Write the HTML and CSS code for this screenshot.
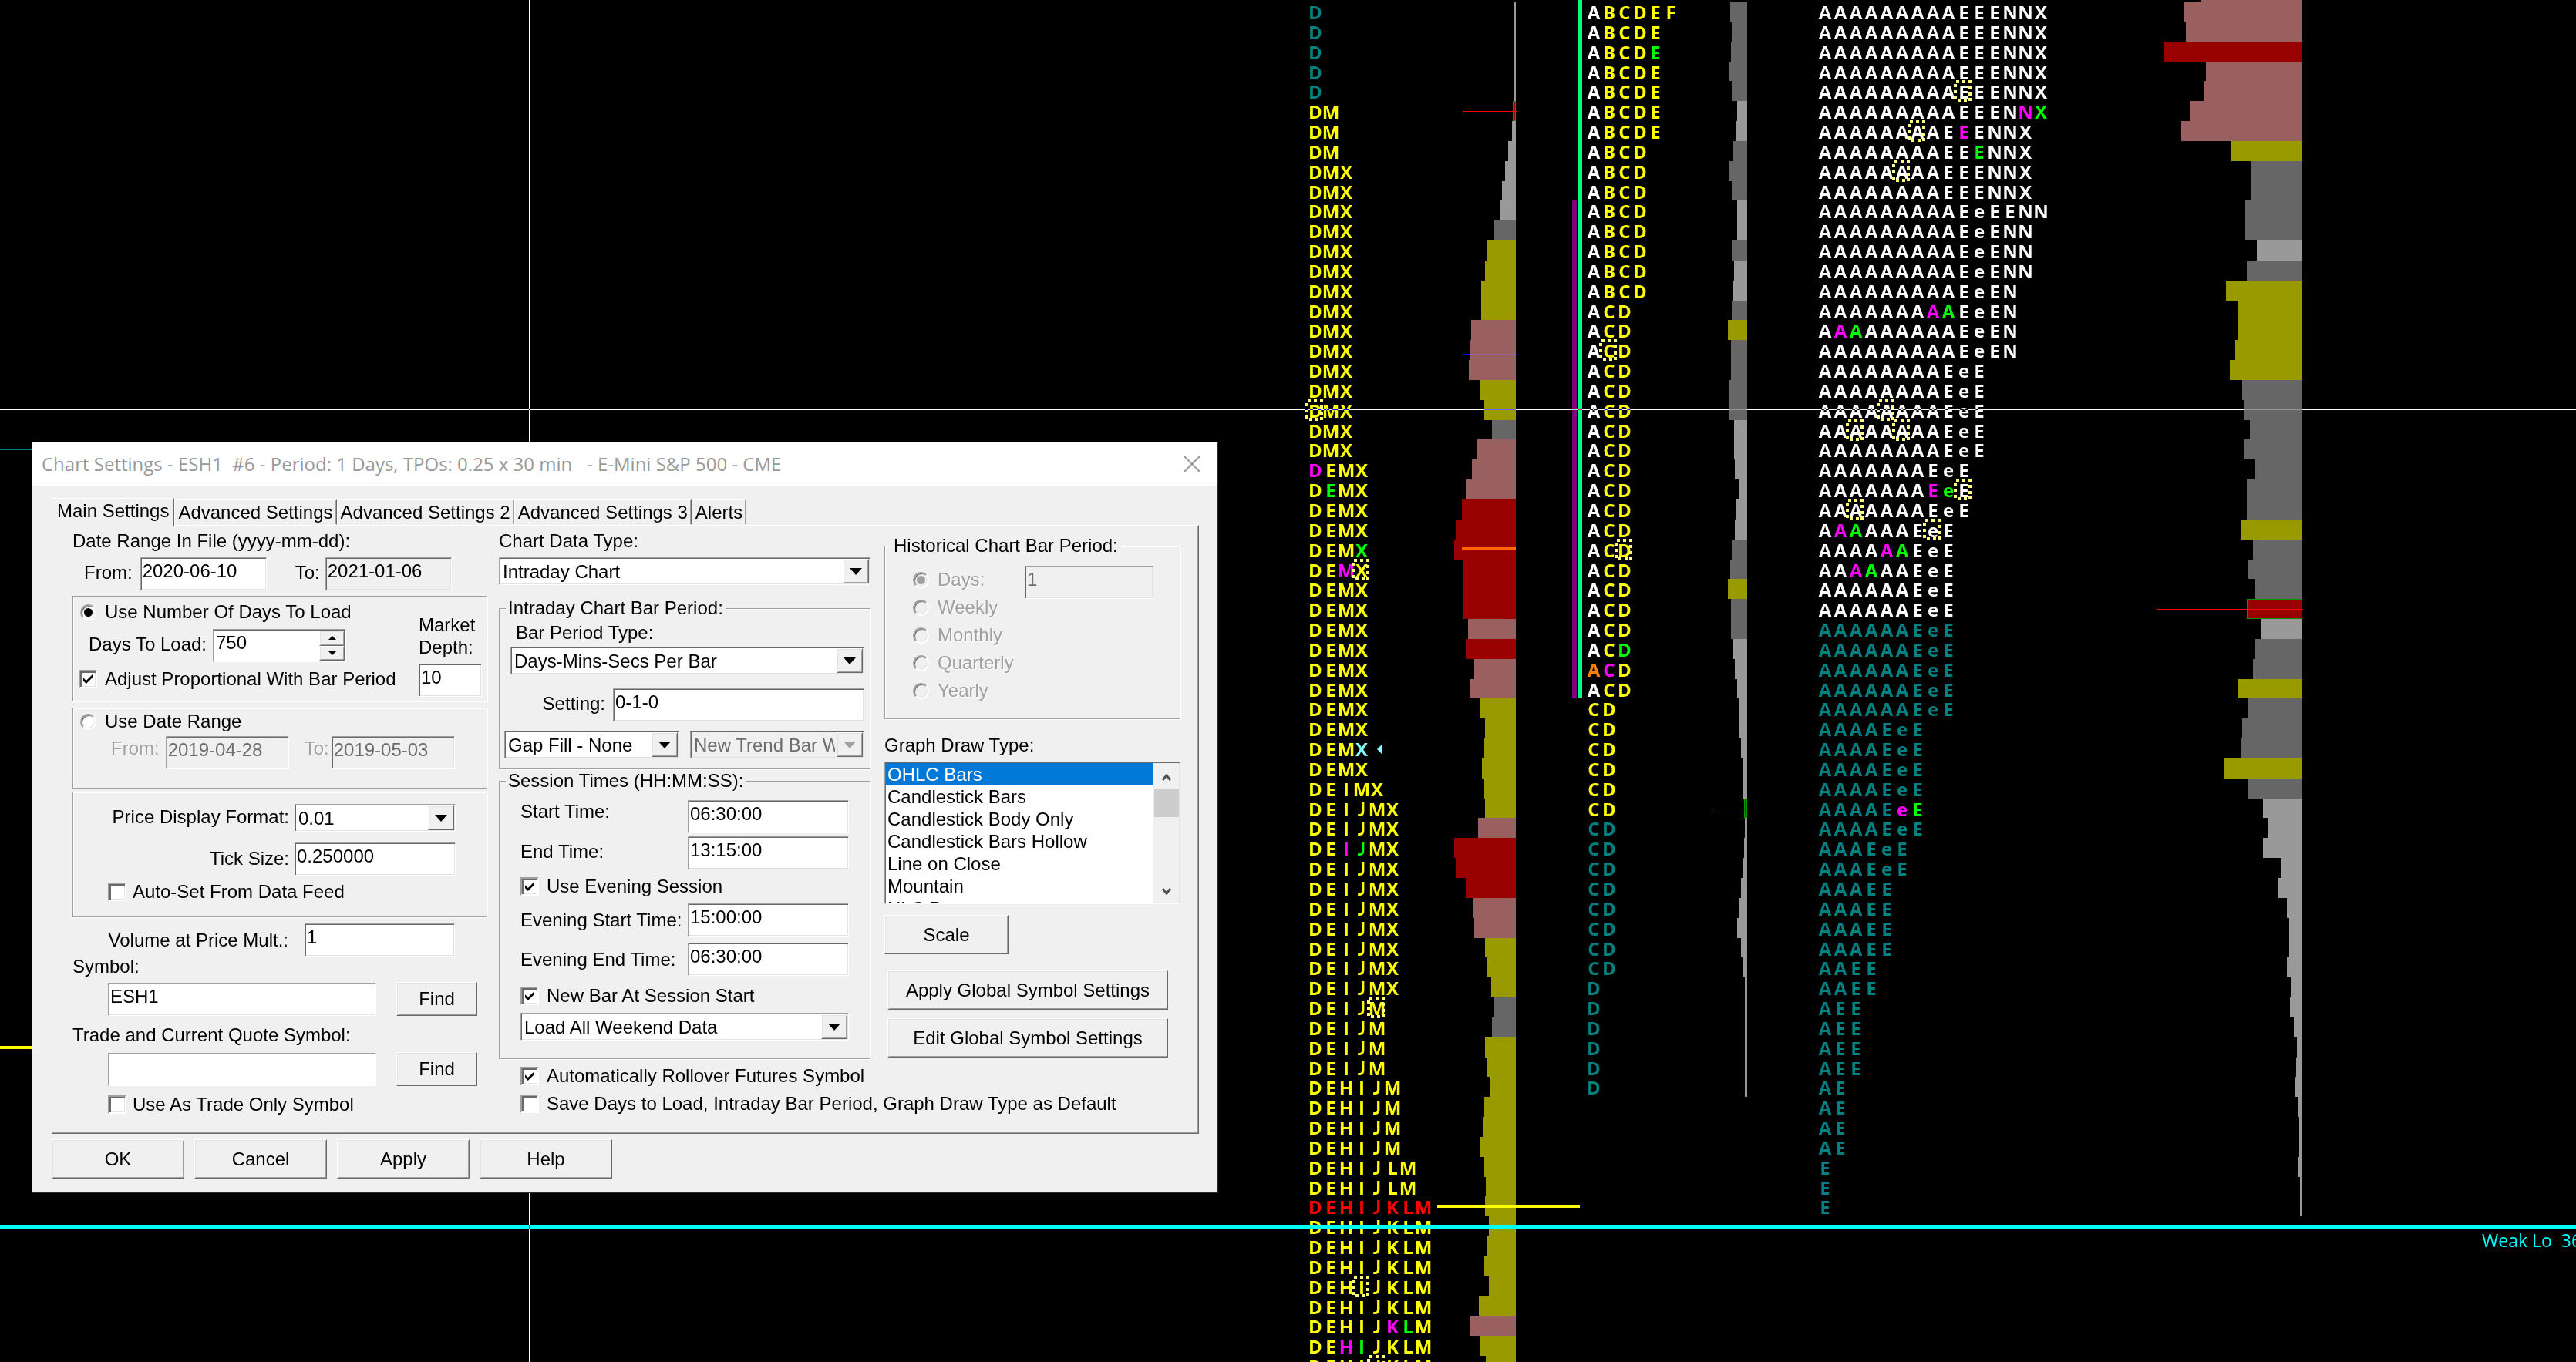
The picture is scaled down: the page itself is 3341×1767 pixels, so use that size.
FILE: index.html
```html
<!DOCTYPE html>
<html lang="en">
<head>
<meta charset="utf-8">
<title>Chart Settings - ESH1</title>
<link rel="stylesheet" href="styles.css">
</head>
<body>
<main class="chart">
  <section class="profile profile-first" aria-label="Profile 1"><div class="rows" id="profile-1"></div></section>
  <section class="profile profile-second" aria-label="Profile 2">
    <span class="range range-purple"></span>
    <span class="range range-green"></span>
    <div class="rows" id="profile-2"></div>
  </section>
  <section class="profile profile-third" aria-label="Profile 3"><div class="rows" id="profile-3"></div></section>

  <i class="level level-teal"></i>
  <i class="level level-yellow-left"></i>
  <i class="level level-yellow"></i>
  <i class="level level-cyan"></i>
  <p class="level-label">Weak Lo  3650</p>
  <i class="crosshair crosshair-h"></i>
  <i class="crosshair crosshair-v"></i>
</main>

<form class="dialog" role="dialog" aria-labelledby="dialog-title" onsubmit="return false">
  <header class="titlebar">
    <h1 class="title" id="dialog-title">Chart Settings - ESH1  #6 - Period: 1 Days, TPOs: 0.25 x 30 min   - E-Mini S&amp;P 500 - CME</h1>
    <button class="close" type="button" aria-label="Close"><svg width="22" height="22" viewBox="0 0 22 22"><path d="M1 1 21 21M21 1 1 21" fill="none" stroke="#999" stroke-width="2"/></svg></button>
  </header>

  <div class="dialog-body">
    <nav class="tabs" role="tablist">
      <button class="tab tab-active" type="button" role="tab" aria-selected="true">Main Settings</button>
      <button class="tab" type="button" role="tab">Advanced Settings</button>
      <button class="tab" type="button" role="tab">Advanced Settings 2</button>
      <button class="tab" type="button" role="tab">Advanced Settings 3</button>
      <button class="tab" type="button" role="tab">Alerts</button>
    </nav>

    <div class="panel" role="tabpanel">
      <div class="column">
        <p class="caption">Date Range In File (yyyy-mm-dd):</p>
        <div class="row date-row">
          <label class="label" for="file-from">From:</label>
          <input class="field date-field" id="file-from" value="2020-06-10">
          <label class="label label-to" for="file-to">To:</label>
          <input class="field date-field field-locked" id="file-to" value="2021-01-06" readonly>
        </div>

        <fieldset class="box days-box">
          <div class="days-main">
            <label class="tick"><input class="radio" type="radio" name="load" checked>Use Number Of Days To Load</label>
            <div class="row days-row">
              <label class="label" for="days">Days To Load:</label>
              <span class="spin">
                <input class="spin-field" id="days" value="750">
                <span class="spin-buttons">
                  <button class="spin-button" type="button" aria-label="More"><i class="arrow arrow-up"></i></button>
                  <button class="spin-button" type="button" aria-label="Less"><i class="arrow arrow-small"></i></button>
                </span>
              </span>
            </div>
            <label class="tick"><input class="check" type="checkbox" checked>Adjust Proportional With Bar Period</label>
          </div>
          <div class="depth">
            <label class="depth-label" for="depth">Market Depth:</label>
            <input class="field depth-field" id="depth" value="10">
          </div>
        </fieldset>

        <fieldset class="box range-box">
          <label class="tick"><input class="radio" type="radio" name="load">Use Date Range</label>
          <div class="row range-row">
            <label class="label label-off" for="range-from">From:</label>
            <input class="field range-field" id="range-from" value="2019-04-28" disabled>
            <label class="label label-off label-range-to" for="range-to">To:</label>
            <input class="field range-field" id="range-to" value="2019-05-03" disabled>
          </div>
        </fieldset>

        <fieldset class="box price-box">
          <div class="row">
            <label class="label label-right" for="format">Price Display Format:</label>
            <span class="combo combo-short"><select class="combo-select" id="format"><option>0.01</option></select><span class="combo-button"><i class="arrow"></i></span></span>
          </div>
          <div class="row tick-row">
            <label class="label label-right" for="tick-size">Tick Size:</label>
            <input class="field time-field" id="tick-size" value="0.250000">
          </div>
          <label class="tick tick-indent"><input class="check" type="checkbox">Auto-Set From Data Feed</label>
        </fieldset>

        <div class="row volume-row">
          <label class="label label-right" for="mult">Volume at Price Mult.:</label>
          <input class="field mult-field" id="mult" value="1">
        </div>
        <label class="caption caption-symbol" for="symbol">Symbol:</label>
        <div class="row symbol-row">
          <input class="field symbol-field" id="symbol" value="ESH1">
          <button class="button find" type="button">Find</button>
        </div>
        <label class="caption caption-trade" for="trade">Trade and Current Quote Symbol:</label>
        <div class="row symbol-row">
          <input class="field symbol-field" id="trade" value="">
          <button class="button find" type="button">Find</button>
        </div>
        <label class="tick tick-trade"><input class="check" type="checkbox">Use As Trade Only Symbol</label>
      </div>

      <div class="column">
        <label class="caption" for="data-type">Chart Data Type:</label>
        <span class="combo combo-data"><select class="combo-select" id="data-type"><option>Intraday Chart</option></select><span class="combo-button"><i class="arrow"></i></span></span>

        <fieldset class="group intraday">
          <legend class="legend">Intraday Chart Bar Period:</legend>
          <label class="caption caption-bar" for="bar-type">Bar Period Type:</label>
          <span class="combo combo-bar"><select class="combo-select" id="bar-type"><option>Days-Mins-Secs Per Bar</option></select><span class="combo-button"><i class="arrow"></i></span></span>
          <div class="row setting-row">
            <label class="label" for="setting">Setting:</label>
            <input class="field setting-field" id="setting" value="0-1-0">
          </div>
          <div class="row gap-row">
            <span class="combo combo-gap"><select class="combo-select" aria-label="Gap fill"><option>Gap Fill - None</option></select><span class="combo-button"><i class="arrow"></i></span></span>
            <span class="combo combo-off"><select class="combo-select" aria-label="Trend bar" disabled><option>New Trend Bar When</option></select><span class="combo-button"><i class="arrow"></i></span></span>
          </div>
        </fieldset>

        <fieldset class="group session">
          <legend class="legend">Session Times (HH:MM:SS):</legend>
          <div class="row time-row"><label class="label label-raised" for="start">Start Time:</label><input class="field time-field" id="start" value="06:30:00"></div>
          <div class="row time-row"><label class="label" for="end">End Time:</label><input class="field time-field" id="end" value="13:15:00"></div>
          <label class="tick"><input class="check" type="checkbox" checked>Use Evening Session</label>
          <div class="row time-row"><label class="label label-level" for="ev-start">Evening Start Time:</label><input class="field time-field" id="ev-start" value="15:00:00"></div>
          <div class="row time-row time-row-last"><label class="label label-level" for="ev-end">Evening End Time:</label><input class="field time-field" id="ev-end" value="06:30:00"></div>
          <label class="tick tick-bar"><input class="check" type="checkbox" checked>New Bar At Session Start</label>
          <span class="combo combo-weekend"><select class="combo-select" aria-label="Weekend data"><option>Load All Weekend Data</option></select><span class="combo-button"><i class="arrow"></i></span></span>
        </fieldset>

        <label class="tick tick-option"><input class="check" type="checkbox" checked>Automatically Rollover Futures Symbol</label>
        <label class="tick tick-option tick-save"><input class="check" type="checkbox">Save Days to Load, Intraday Bar Period, Graph Draw Type as Default</label>
      </div>

      <div class="column column-last">
        <fieldset class="group historical">
          <legend class="legend">Historical Chart Bar Period:</legend>
          <div class="periods">
            <label class="tick tick-off"><input class="radio" type="radio" name="period" checked disabled>Days:</label>
            <label class="tick tick-off"><input class="radio" type="radio" name="period" disabled>Weekly</label>
            <label class="tick tick-off"><input class="radio" type="radio" name="period" disabled>Monthly</label>
            <label class="tick tick-off"><input class="radio" type="radio" name="period" disabled>Quarterly</label>
            <label class="tick tick-off"><input class="radio" type="radio" name="period" disabled>Yearly</label>
          </div>
          <input class="field period-field" value="1" aria-label="Number of days" disabled>
        </fieldset>

        <label class="caption caption-graph" for="draw-type">Graph Draw Type:</label>
        <div class="list">
          <select class="list-select" id="draw-type" size="7">
            <option class="item" selected>OHLC Bars</option>
            <option class="item">Candlestick Bars</option>
            <option class="item">Candlestick Body Only</option>
            <option class="item">Candlestick Bars Hollow</option>
            <option class="item">Line on Close</option>
            <option class="item">Mountain</option>
            <option class="item">HLC Bars</option>
          </select>
          <div class="scroll">
            <svg class="scroll-arrow" width="12" height="10" viewBox="0 0 12 10"><path d="M1 8 6 2 11 8" fill="none" stroke="#505050" stroke-width="3"/></svg>
            <span class="thumb"></span>
            <svg class="scroll-arrow scroll-down" width="12" height="10" viewBox="0 0 12 10"><path d="M1 2 6 8 11 2" fill="none" stroke="#505050" stroke-width="3"/></svg>
          </div>
        </div>
        <button class="button scale" type="button">Scale</button>
        <button class="button global global-apply" type="button">Apply Global Symbol Settings</button>
        <button class="button global" type="button">Edit Global Symbol Settings</button>
      </div>
    </div>

    <footer class="actions">
      <button class="button action" type="button">OK</button>
      <button class="button action" type="button">Cancel</button>
      <button class="button action" type="button">Apply</button>
      <button class="button action" type="button">Help</button>
    </footer>
  </div>
</form>
<script src="script.js"></script>
</body>
</html>
```
FILE: styles.css
```css
* { box-sizing: border-box; }

body {
  margin: 0;
  background: #000;
  color: #000;
  font: 24px/26px "Liberation Sans", Arial, sans-serif;
  overflow: hidden;
}

p, h1, fieldset, legend { margin: 0; padding: 0; font-size: inherit; font-weight: normal; }
button, input, select { font: inherit; color: inherit; margin: 0; border-radius: 0; }

/* Chart */
.chart {
  position: relative;
  display: flex;
  justify-content: flex-end;
  height: 100vh;
  padding: 2px 355px 0 0;
  overflow: hidden;
  font: bold 24px/24px "Open Sans", "Noto Sans", sans-serif;
}

.profile { display: flex; flex: none; align-items: flex-start; height: 1783px; position: relative; }
.profile-first { width: 270px; margin-right: 73px; }
.profile-second { width: 227px; margin-right: 91px; }
.profile-third { width: 629px; }
.profile-third::before { content: ""; position: absolute; top: -2px; right: 0; width: 131px; height: 2px; background: #9a5f5f; }

.range { flex: none; width: 6px; margin-right: 1px; }
.range-purple { height: 646px; margin-top: 258px; background: #800080; }
.range-green { height: 906px; margin: -2px 5px 0 0; background: #00ff80; }

.rows { flex: 1; display: grid; grid-template-rows: repeat(69, minmax(0, 1fr)); height: 100%; }
.price { position: relative; display: flex; justify-content: space-between; }
.letters { display: flex; padding-top: 2px; }
.letter { position: relative; display: flex; justify-content: center; width: 20px; }
.letter-j { font-family: Lato, "Open Sans", sans-serif; }

.yellow { color: #ff0; }
.white { color: #fff; }
.teal { color: #008080; }
.red { color: #f00; }
.magenta { color: #f0f; }
.green { color: #0f0; }
.orange { color: #ff8000; }
.cyan { color: #80ffff; }

.volume { flex: none; height: 100%; }
.volume-light { background: #999; }
.volume-dark { background: #666; }
.volume-olive { background: #990; }
.volume-pink { background: #9a5f5f; }
.volume-red { background: #900; }
.volume-peak { background: #900; border: 1px solid #090; }

.dots { position: absolute; left: -3px; top: -3px; fill: #ffff80; }
.pointer { position: absolute; left: 90px; top: 7px; fill: #80ffff; }

.mark { position: absolute; right: -1px; height: 1px; }
.mark-red { top: 13px; background: #f00; }
.mark-blue { top: 18px; background: #00f; mix-blend-mode: difference; }
.mark-orange { top: 10px; right: 0; height: 4px; background: #f60; }

.level { position: absolute; }
.level-teal { left: 0; top: 582px; width: 60px; height: 2px; background: #008080; }
.level-yellow-left { left: 0; top: 1357px; width: 60px; height: 4px; background: #ff0; }
.level-yellow { right: 1292px; top: 1563px; width: 185px; height: 4px; background: #ff0; }
.level-cyan { left: 0; right: 0; top: 1589px; height: 5px; background: #0ff; }
.level-label {
  position: absolute;
  left: calc(100% - 122px);
  top: 1596px;
  color: #0ff;
  font: 23px/26px "Open Sans", "Noto Sans", sans-serif;
  white-space: pre;
}
.crosshair { position: absolute; background: #fff; mix-blend-mode: difference; }
.crosshair-h { left: 0; right: 0; top: 531px; height: 1px; }
.crosshair-v { left: 686px; top: 0; bottom: 0; width: 1px; }

/* Dialog window */
.dialog {
  position: absolute;
  left: 42px;
  top: 574px;
  width: 46vw;
  background: #f0f0f0;
  box-shadow: 0 0 0 1px #2b2b2b;
  white-space: nowrap;
}
.titlebar { display: flex; align-items: center; justify-content: space-between; height: 56px; padding: 0 22px 0 12px; background: #fff; }
.title { color: #999; font: 24px/28px "Open Sans", "Noto Sans", sans-serif; white-space: pre; }
.close { display: flex; padding: 0; border: 0; background: none; }
.dialog-body { padding: 16px 24px 18px 25px; }

.tabs { display: flex; align-items: flex-end; height: 35px; }
.tab {
  height: 33px;
  padding: 0 4px;
  border: 1px solid;
  border-color: #fff #696969 transparent #fff;
  background: #f0f0f0;
  box-shadow: inset -1px 0 #a0a0a0;
}
.tab-active { height: 37px; margin-bottom: -2px; padding: 0 6px 4px; border-bottom: 0; }

.panel {
  display: grid;
  grid-template-columns: 538px 482px 384px;
  column-gap: 15px;
  height: 790px;
  padding: 7px 0 0 26px;
  border: 1px solid;
  border-color: #fff #696969 #696969 #fff;
  box-shadow: inset -1px -1px #a0a0a0;
}
.column { display: flex; flex-direction: column; min-width: 0; }
.column-last { padding: 6px 0 0 3px; width: 387px; }

.actions { display: flex; gap: 13px; padding-top: 7px; }
.action { width: 172px; height: 51px; }

.button, .combo-button, .spin-button {
  padding: 0;
  border: 1px solid;
  border-color: #fff #696969 #696969 #fff;
  background: #f0f0f0;
  box-shadow: inset 1px 1px #e3e3e3, inset -1px -1px #a0a0a0;
}

.field, .combo, .spin, .list {
  border: 1px solid;
  border-color: #a0a0a0 #fff #fff #a0a0a0;
  background: #fff;
  box-shadow: inset 1px 1px #696969, inset -1px -1px #e3e3e3;
}
.field { flex: none; height: 43px; padding: 1px 2px 8px; outline: 0; }
.field-locked { background: #f0f0f0; }
.field:disabled { background: #f0f0f0; color: #6d6d6d; }

.row { display: flex; align-items: center; }
.label { flex: none; padding-bottom: 4px; }
.label-level { padding-bottom: 0; }
.label-raised { padding-bottom: 14px; }
.label-off { color: #a0a0a0; padding-bottom: 12px; text-shadow: 1px 1px #fff; }
.label-right { width: 280px; text-align: right; }
.price-box .label-right { padding-bottom: 2px; }
.volume-row .label-right { padding-bottom: 0; }
.caption { display: block; flex: none; height: 26px; }

.tick { display: flex; align-items: center; height: 24px; line-height: 28px; }
.tick-off { color: #a0a0a0; text-shadow: 1px 1px #fff; }

.check, .radio {
  appearance: none;
  flex: none;
  display: flex;
  align-items: center;
  justify-content: center;
  width: 24px;
  height: 24px;
  margin-right: 10px;
  border: 2px solid;
  border-color: #a0a0a0 #fff #fff #a0a0a0;
  background: #fff;
  box-shadow: inset 2px 2px #696969, inset -1px -1px #e3e3e3;
}
.check:checked::before {
  content: "";
  width: 12px;
  height: 12px;
  background: #000;
  clip-path: polygon(0 35%, 32% 66%, 100% 0, 100% 34%, 32% 100%, 0 68%);
}
.radio {
  width: 21px;
  height: 21px;
  margin-right: 11px;
  border-radius: 50%;
  box-shadow: inset 1px 1px #696969, inset -1px -1px #e3e3e3;
}
.radio:checked::before { content: ""; width: 11px; height: 11px; border-radius: 50%; background: #000; }
.radio:disabled { background: #f0f0f0; }
.radio:disabled:checked::before { background: #a0a0a0; }

.arrow { border: 8px solid transparent; border-top: 9px solid #000; border-bottom: 0; }
.arrow-small { border-width: 5px 5px 0; }
.arrow-up { border: 5px solid transparent; border-bottom-color: #000; border-top: 0; }

.combo { display: grid; grid-template-columns: 1fr 34px; height: 36px; padding: 1px; }
.combo-select { grid-area: 1 / 1 / 2 / 3; appearance: none; min-width: 0; padding: 1px 36px 0 3px; border: 0; background: none; outline: 0; }
.combo-button { grid-area: 1 / 2; display: flex; align-items: center; justify-content: center; pointer-events: none; }
.combo-short { width: 209px; }
.combo-off { background: #f0f0f0; color: #6d6d6d; }
.combo-off .combo-select { opacity: 1; color: #6d6d6d; overflow: hidden; text-overflow: clip; }
.combo-off .arrow { border-top-color: #a0a0a0; }

/* First column */
.date-row { margin-top: 8px; padding-left: 15px; }
.date-field { width: 164px; margin-left: auto; }
.label-to { margin-left: 37px; }
.date-row .date-field { margin-left: 10px; }
.date-row .field-locked { margin-left: 7px; }

.box, .group { min-width: 0; border: 1px solid #a0a0a0; box-shadow: 1px 1px #fff, inset 1px 1px #fff; }
.days-box { display: flex; justify-content: space-between; height: 137px; margin-top: 7px; padding: 8px 6px 0 7px; }
.days-main { display: flex; flex-direction: column; }
.days-box .radio, .range-box .radio { margin-left: 2px; }
.days-row { margin: 10px 0; padding-left: 13px; gap: 8px; }
.spin { display: flex; width: 173px; height: 43px; padding: 1px; }
.spin-field { flex: 1; min-width: 0; padding: 0 2px 7px; border: 0; background: none; outline: 0; }
.spin-buttons { display: grid; width: 33px; }
.spin-button { display: flex; align-items: center; justify-content: center; }
.depth { display: flex; flex-direction: column; width: 82px; padding-top: 14px; }
.depth-label { height: 65px; line-height: 29px; white-space: normal; }
.depth-field { width: 82px; }

.range-box { height: 105px; margin-top: 8px; padding: 5px 7px 0; }
.range-row { margin-top: 7px; padding-left: 42px; }
.range-field { width: 160px; margin-left: 8px; }
.label-range-to { margin-left: 20px; }
.label-range-to + .range-field { margin-left: 3px; }

.price-box { height: 163px; margin-top: 4px; padding-top: 15px; }
.price-box .row, .volume-row { gap: 7px; }
.tick-row { margin-top: 14px; }
.tick-indent { margin: 9px 0 0 45px; }
.mult-field { width: 195px; margin-left: 14px; }
.volume-row { margin-top: 8px; }
.caption-symbol { margin-bottom: 7px; }
.symbol-row { justify-content: space-between; padding: 0 13px 0 46px; }
.symbol-field { width: 348px; }
.find { width: 105px; height: 44px; }
.caption-trade { margin: 12px 0 9px; }
.tick-trade { margin: 12px 0 0 46px; }
.tick-indent .check, .tick-trade .check { margin-right: 8px; }

/* Second column */
.combo-data { margin-top: 8px; }
.group { padding-left: var(--inset); padding-right: var(--inset-end); }
.legend { height: 26px; margin-left: calc(8px - var(--inset)); padding: 0 3px; background: #f0f0f0; }
.intraday { --inset: 6px; --inset-end: 7px; height: 222px; margin-top: 17px; padding-top: 6px; }
.caption-bar { margin-left: 15px; }
.combo-bar { margin: 5px 0 0 8px; }
.setting-row { justify-content: flex-end; gap: 10px; margin-top: 18px; }
.setting-field { width: 326px; }
.gap-row { gap: 14px; margin-top: 12px; }
.combo-gap { width: 227px; }
.combo-off { flex: 1; min-width: 0; }

.session { --inset: 27px; --inset-end: 27px; height: 374px; margin-top: 2px; padding-top: 12px; }
.time-row { justify-content: space-between; margin-bottom: 4px; }
.time-field { width: 209px; }
.time-row + .tick { margin: 10px 0; }
.tick + .time-row { margin-bottom: 8px; }
.time-row-last + .tick-bar { margin: 14px 0 10px; }
.tick-option { margin: 10px 0 0 28px; }
.tick-save { margin-top: 12px; }

/* Third column */
.historical { --inset: 36px; --inset-end: 34px; height: 238px; padding-top: 13px; }
.periods { float: left; }
.periods .tick { height: 36px; }
.period-field { float: right; width: 167px; }
.caption-graph { margin: 21px 0 8px; }
.list { display: grid; grid-template-columns: 1fr 33px; height: 185px; padding: 1px; overflow: hidden; }
.list-select { height: 203px; padding: 0; border: 0; background: none; outline: 0; overflow: hidden; scrollbar-width: none; }
.item { height: 29px; min-height: 29px; padding: 1px 2px 2px; line-height: 26px; color: #000; }
.item:checked { background: linear-gradient(#0078d7, #0078d7); -webkit-text-fill-color: #fff; }
.scroll { display: flex; flex-direction: column; align-items: center; height: 181px; background: #f0f0f0; }
.scroll-arrow { margin: 14px 0 10px; }
.thumb { width: 32px; height: 36px; background: #cdcdcd; }
.scroll-down { margin-top: auto; }
.scale { width: 161px; height: 51px; margin-top: 14px; }
.global { width: 364px; height: 51px; margin: 11px 0 0 4px; }
.global-apply { margin-top: 21px; }
```
FILE: script.js
```js
// Letter runs: [letters, number of price rows, colour of the run].
const profiles = [
  {
    id: 'profile-1',
    runs: [
      ['D', 5, 'teal'], ['DM', 3, 'yellow'], ['DMX', 15, 'yellow'], ['DEMX', 16, 'yellow'],
      ['DEIMX', 1, 'yellow'], ['DEIJMX', 10, 'yellow'], ['DEIJM', 4, 'yellow'],
      ['DEHIJM', 4, 'yellow'], ['DEHIJLM', 2, 'yellow'], ['DEHIJKLM', 1, 'red'],
      ['DEHIJKLM', 8, 'yellow'],
    ],
    // row, column, colour
    tints: [[23, 0, 'magenta'], [24, 1, 'green'], [27, 3, 'green'], [28, 2, 'magenta'], [37, 3, 'cyan'],
      [42, 2, 'magenta'], [42, 3, 'green'], [66, 5, 'magenta'], [66, 6, 'green'],
      [67, 2, 'magenta'], [67, 3, 'green']],
    dots: [[20, 0], [28, 3], [50, 4], [64, 3], [68, 4]],
    // row, kind, width
    marks: [[5, 'red', 70], [17, 'blue', 70], [27, 'orange', 70]],
    pointer: 37,
    volume: 'l3 l3 l3 l3 l3 k4 l5 l10 l14 l18 l21 d28 o37 o40 o45 o45 p58 p59 p61 o46 o41 d31 p51 p57 p64 r70 r78 r80 r69 r69 r69 p62 r64 p54 p60 o47 o40 o41 o44 o41 o40 p49 r80 r78 r65 p55 p54 o40 o37 o32 d28 d31 o40 o37 o34 o41 o42 o46 o41 o39 o40 o35 o37 o41 o35 o48 p60 o47 o39',
  },
  {
    id: 'profile-2',
    runs: [
      ['ABCDEF', 1, 'yellow'], ['ABCDE', 6, 'yellow'], ['ABCD', 8, 'yellow'], ['ACD', 20, 'yellow'],
      ['CD', 6, 'yellow'], ['CD', 8, 'teal'], ['D', 6, 'teal'],
    ],
    whiteA: true,
    tints: [[2, 4, 'green'], [32, 2, 'green'], [33, 0, 'orange'], [33, 1, 'magenta']],
    dots: [[17, 1], [27, 2]],
    marks: [[40, 'red', 50]],
    volume: 'd22 d19 d21 d23 d19 l13 l14 d18 d24 d19 l13 l13 d20 l17 l18 d19 o25 d21 d21 d23 d23 l17 l17 l16 l11 l15 l16 d19 d22 o25 d21 d21 l18 l16 l13 l10 l10 l8 l6 l6 k4 l3 l4 l5 l8 l11 l13 l8 l6 l3 l3 l3 l3 l3 l3',
  },
  {
    id: 'profile-3',
    runs: [
      ['AAAAAAAAAEEENNX', 6, 'white'], ['AAAAAAAAEEENNX', 4, 'white'], ['AAAAAAAAAEeEENN', 1, 'white'],
      ['AAAAAAAAAEeENN', 3, 'white'], ['AAAAAAAAAEeEN', 4, 'white'], ['AAAAAAAAEeE', 5, 'white'],
      ['AAAAAAAEeE', 3, 'white'], ['AAAAAAEeE', 5, 'white'], ['AAAAAAEeE', 5, 'teal'],
      ['AAAAEeE', 6, 'teal'], ['AAAEeE', 2, 'teal'], ['AAAEE', 4, 'teal'], ['AAEE', 2, 'teal'],
      ['AEE', 4, 'teal'], ['AE', 4, 'teal'], ['E', 3, 'teal'],
    ],
    tints: [[5, 13, 'magenta'], [5, 14, 'green'], [6, 9, 'magenta'], [7, 10, 'green'],
      [15, 7, 'magenta'], [15, 8, 'green'], [16, 1, 'magenta'], [16, 2, 'green'],
      [24, 7, 'magenta'], [24, 8, 'green'], [26, 1, 'magenta'], [26, 2, 'green'],
      [27, 4, 'magenta'], [27, 5, 'green'], [28, 2, 'magenta'], [28, 3, 'green'],
      [40, 5, 'magenta'], [40, 6, 'green']],
    dots: [[4, 9], [6, 6], [8, 5], [20, 4], [21, 2], [21, 5], [24, 9], [25, 2], [26, 7]],
    marks: [[30, 'red', 190]],
    volume: 'p154 p151 r180 p125 p128 p146 p157 o92 d67 d67 d74 d74 l59 d72 o99 o83 o84 o87 o94 d78 d75 d68 d75 d61 d72 d72 o80 d64 d70 d61 k72 l53 d61 d64 o84 d70 d78 d80 o101 d70 l51 l45 l51 l27 l31 l20 l17 l17 l20 l15 l16 l11 l7 l8 l9 l5 l4 l4 l6 l3 l3',
  },
];

const kinds = { l: 'light', d: 'dark', o: 'olive', p: 'pink', r: 'red', k: 'peak' };
const spots = [[3, 0], [11, 0], [19, 0], [0, 5], [0, 13], [0, 21], [5, 24], [13, 24], [19, 8], [19, 16], [19, 23]];
const dotBox = '<svg class="dots" width="23" height="28">' +
  spots.map(([x, y]) => `<rect x="${x}" y="${y}" width="4" height="4"/>`).join('') + '</svg>';

for (const profile of profiles) {
  const lines = profile.runs.flatMap(([text, count, tone]) => Array(count).fill([text, tone]));
  const bars = profile.volume.split(' ');
  document.getElementById(profile.id).innerHTML = lines.map(([text, tone], row) => {
    const letters = [...text].map((letter, col) => {
      const tint = profile.tints.find(t => t[0] === row && t[1] === col);
      const own = profile.whiteA && letter === 'A' ? 'white' : tone;
      const boxed = profile.dots.some(d => d[0] === row && d[1] === col);
      const shape = letter === 'J' ? ' letter-j' : '';
      return `<span class="letter${shape} ${tint ? tint[2] : own}">${letter}${boxed ? dotBox : ''}</span>`;
    }).join('');
    const mark = profile.marks.filter(m => m[0] === row)
      .map(m => `<i class="mark mark-${m[1]}" style="width:${m[2]}px"></i>`).join('');
    const pointer = profile.pointer === row
      ? '<svg class="pointer" width="7" height="14"><path d="M7 0V14L0 7z"/></svg>' : '';
    const bar = bars[row];
    return `<div class="price"><span class="letters">${letters}</span>` +
      `<span class="volume volume-${kinds[bar[0]]}" style="width:${bar.slice(1)}px"></span>${mark}${pointer}</div>`;
  }).join('');
}
```
